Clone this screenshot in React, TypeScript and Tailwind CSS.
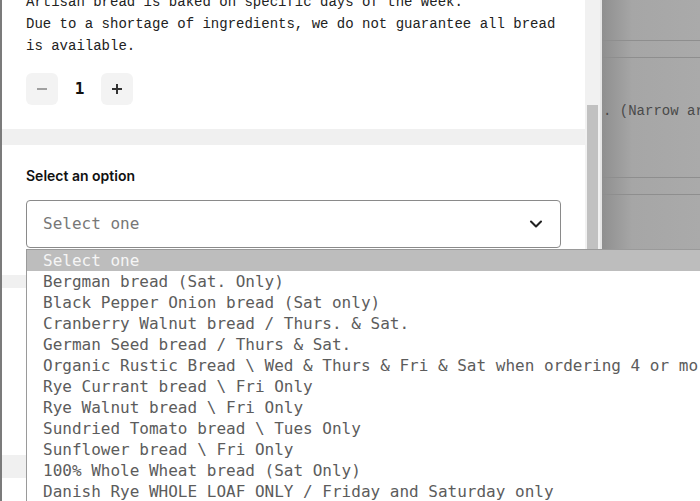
import React from 'react';
import { ChevronDown } from 'lucide-react';

const breads = [
    'Bergman bread (Sat. Only)',
    'Black Pepper Onion bread (Sat only)',
    'Cranberry Walnut bread / Thurs. & Sat.',
    'German Seed bread / Thurs & Sat.',
    'Organic Rustic Bread \\ Wed & Thurs & Fri & Sat when ordering 4 or more',
    'Rye Currant bread \\ Fri Only',
    'Rye Walnut bread \\ Fri Only',
    'Sundried Tomato bread \\ Tues Only',
    'Sunflower bread \\ Fri Only',
    '100% Whole Wheat bread (Sat Only)',
    'Danish Rye WHOLE LOAF ONLY / Friday and Saturday only',
];

const App = () => {
    return (
        <div className="relative h-[501px] w-[700px] overflow-hidden flex bg-[#a8a8a8]">
            {/* backdrop edge */}
            <div className="w-[2px] shrink-0 bg-[#7b7b7b]" />

            {/* product panel */}
            <div className="w-[583px] shrink-0 bg-white flex flex-col">
                <div className="px-6">
                    <p className="-mt-[9px] text-[14px] leading-[22px] text-[#222] font-['Liberation_Mono',monospace]">
                        Artisan bread is baked on specific days of the week.
                        <br />
                        Due to a shortage of ingredients, we do not guarantee all bread is available.
                    </p>

                    <div className="mt-4 flex items-center">
                        <button className="h-8 w-8 rounded-md bg-[#f3f3f3] flex items-center justify-center">
                            <span className="block h-[1.5px] w-[10px] bg-[#a0a0a0]" />
                        </button>
                        <span className="w-[43px] text-center text-[16px] font-bold text-[#111] font-['DejaVu_Sans_Mono',monospace]">1</span>
                        <button className="relative h-8 w-8 rounded-md bg-[#f3f3f3] flex items-center justify-center">
                            <span className="absolute h-[1.5px] w-[10px] bg-[#333]" />
                            <span className="absolute h-[10px] w-[1.5px] bg-[#333]" />
                        </button>
                    </div>
                </div>

                <div className="mt-6 h-4 bg-[#f0f0f0]" />

                <div className="px-6 pt-[21px]">
                    <label className="block text-[14px] leading-5 font-semibold text-[#111] font-['Inter',sans-serif]">Select an option</label>
                    <div className="mt-[14px] h-12 w-[535px] rounded border border-[#8a8a8a] flex items-center justify-between pl-4 pr-[14px]">
                        <span className="text-[16px] text-[#777] font-['DejaVu_Sans_Mono',monospace]">Select one</span>
                        <ChevronDown size={20} strokeWidth={2.5} className="text-[#222]" />
                    </div>
                </div>

                <div className="mt-[27px] h-[13px] bg-[#f0f0f0]" />
                <div className="mt-[167px] h-[23px] bg-[#f0f0f0]" />
            </div>

            {/* scrollbar */}
            <div className="w-[15px] shrink-0 bg-[#f1f1f1] flex justify-center pt-[105px]">
                <div className="w-[11px] h-[160px] bg-[#c1c1c1]" />
            </div>

            {/* page behind overlay */}
            <div className="flex-1 min-w-0 overflow-hidden border-l-2 border-[#e6e6e6] bg-[linear-gradient(to_right,#8f8f8f,#a6a6a6_30px,#aaaaaa)] flex flex-col">
                <div className="mt-[40px] h-px bg-[#8e8e8e]" />
                <div className="mt-[16px] h-px bg-[#8e8e8e]" />
                <p className="mt-[43px] pl-[1px] text-[14px] leading-5 whitespace-nowrap text-[#4a4a4a] font-['Liberation_Mono',monospace]">. (Narrow ar</p>
                <div className="mt-[56px] h-px bg-[#8e8e8e]" />
                <div className="mt-[16px] h-px bg-[#8e8e8e]" />
            </div>

            {/* native select popup */}
            <ul className="absolute left-[26px] top-[249px] w-[674px] overflow-hidden bg-white border-l border-t border-[#9a9a9a] text-[16px] leading-[21px] text-[#5c5c5c] font-['DejaVu_Sans_Mono',monospace] whitespace-nowrap">
                <li className="pl-4 bg-[#bdbdbd] text-[#f5f5f5]">Select one</li>
                {breads.map((b) => (
                    <li key={b} className="pl-4">{b}</li>
                ))}
            </ul>
        </div>
    );
};

export default App;
